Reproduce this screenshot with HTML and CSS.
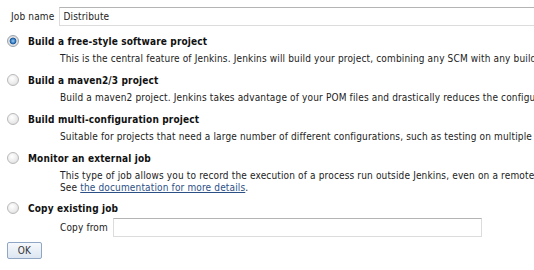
FILE: index.html
```html
<!DOCTYPE html>
<html lang="en">

<head>
    <meta charset="UTF-8">
    <title>New Job</title>
    <link rel="stylesheet" href="styles.css">
</head>

<body>
    <form class="new-job">
        <div class="name-row">
            <label for="name">Job name</label>
            <input type="text" id="name" class="text-box name-box" value="Distribute">
        </div>

        <div class="mode">
            <div class="mode-title"><span class="radio checked"></span><b>Build a free-style software project</b></div>
            <div class="mode-desc">This is the central feature of Jenkins. Jenkins will build your project, combining any SCM with any build system, and this can be even used for something other than software build.</div>
        </div>

        <div class="mode">
            <div class="mode-title"><span class="radio"></span><b>Build a maven2/3 project</b></div>
            <div class="mode-desc">Build a maven2 project. Jenkins takes advantage of your POM files and drastically reduces the configuration.</div>
        </div>

        <div class="mode">
            <div class="mode-title"><span class="radio"></span><b>Build multi-configuration project</b></div>
            <div class="mode-desc">Suitable for projects that need a large number of different configurations, such as testing on multiple environments.</div>
        </div>

        <div class="mode">
            <div class="mode-title"><span class="radio"></span><b>Monitor an external job</b></div>
            <div class="mode-desc">This type of job allows you to record the execution of a process run outside Jenkins, even on a remote machine.<br>See <a href="#">the documentation for more details</a>.</div>
        </div>

        <div class="mode last">
            <div class="mode-title"><span class="radio"></span><b>Copy existing job</b></div>
            <div class="copy-row">
                <label for="from">Copy from</label>
                <input type="text" id="from" class="text-box from-box">
            </div>
        </div>

        <button type="button" class="ok">OK</button>
    </form>
</body>

</html>
```

FILE: styles.css
```css
* {
    margin: 0;
    padding: 0;
    box-sizing: border-box;
}

body {
    font-family: "DejaVu Sans Condensed", "DejaVu Sans", sans-serif;
    font-size: 10px;
    letter-spacing: 0.15px;
    color: #222;
    background: #fff;
    overflow: hidden;
}

.new-job {
    width: 534px;
    padding: 7px 0 0 6px;
}

.name-row {
    display: flex;
    align-items: center;
    padding-left: 5px;
    white-space: nowrap;
}

.name-row label {
    margin-right: 5px;
}

.text-box {
    height: 19px;
    border: 1px solid #dcdcdc;
    border-top-color: #b4b4b4;
    font: inherit;
    letter-spacing: inherit;
    color: #222;
    padding: 0 3px;
    outline: none;
}

.name-box {
    flex: none;
    width: 520px;
}

.mode {
    margin-top: 8px;
}

.mode.last {
    margin-top: 7px;
}

.mode-title {
    display: flex;
    align-items: center;
    height: 14px;
    white-space: nowrap;
}

.mode-title b {
    margin-left: 9px;
    color: #111;
}

.radio {
    width: 12px;
    height: 12px;
    border-radius: 50%;
    border: 1px solid #b9b9b9;
    background: radial-gradient(circle at 40% 35%, #fff 0, #ececec 55%, #d4d4d4 100%);
    flex: none;
    margin-left: 1px;
}

.radio.checked {
    border-color: #9aa4ad;
    background: radial-gradient(circle at 50% 50%, #9fd0f0 0, #2f78c0 32%, #1a4f8e 45%, #e4e4e4 52%, #d0d0d0 100%);
}

.mode-desc {
    padding-left: 54px;
    margin-top: 5px;
    line-height: 12px;
    white-space: nowrap;
    overflow: hidden;
}

.mode-desc a {
    color: #2c4f86;
}

.copy-row {
    display: flex;
    align-items: center;
    padding-left: 54px;
    margin-top: 3px;
    white-space: nowrap;
}

.copy-row label {
    margin-right: 5px;
}

.from-box {
    width: 369px;
}

.ok {
    display: block;
    margin-top: 5px;
    margin-left: 1px;
    width: 35px;
    height: 17px;
    font: inherit;
    letter-spacing: inherit;
    color: #333;
    border: 1px solid #8fa6c4;
    border-radius: 2px;
    background: linear-gradient(#f6f9fc, #dde6f1);
}
```
